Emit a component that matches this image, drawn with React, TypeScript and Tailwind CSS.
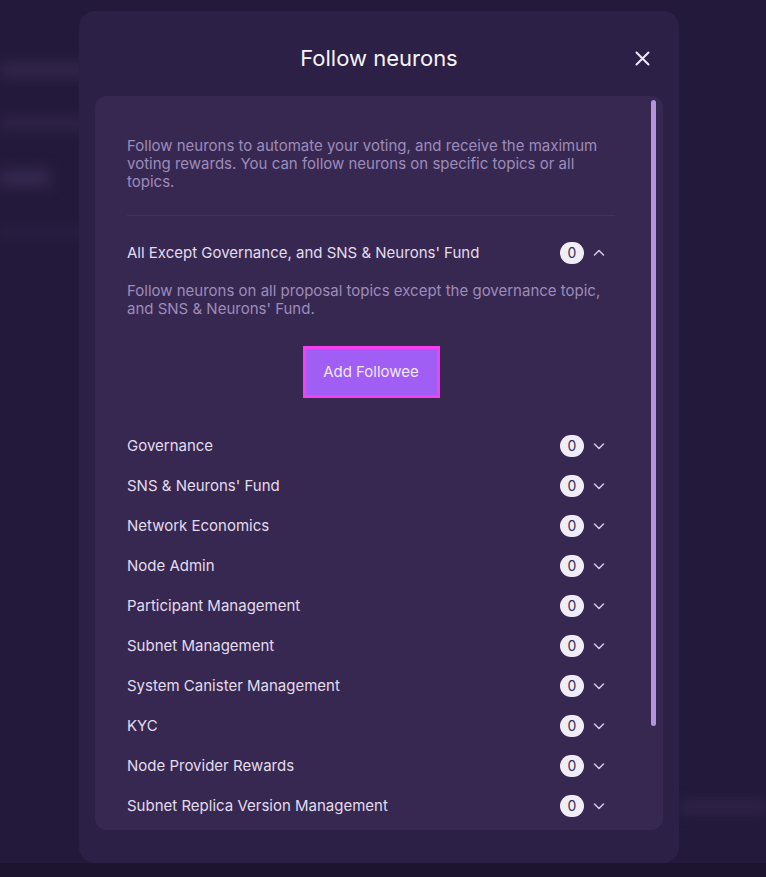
import React from "react";

const topics = [
  "Governance",
  "SNS & Neurons' Fund",
  "Network Economics",
  "Node Admin",
  "Participant Management",
  "Subnet Management",
  "System Canister Management",
  "KYC",
  "Node Provider Rewards",
  "Subnet Replica Version Management",
];

function Chevron({ up }: { up?: boolean }) {
  return (
    <svg width="14" height="14" viewBox="0 0 14 14" fill="none" className="text-[#cfc4e3]">
      <path
        d={up ? "M2.5 9L7 4.5L11.5 9" : "M2.5 5L7 9.5L11.5 5"}
        stroke="currentColor"
        strokeWidth="1.6"
        strokeLinecap="round"
        strokeLinejoin="round"
      />
    </svg>
  );
}

function Badge() {
  return (
    <span className="flex h-[22px] w-[24px] items-center justify-center rounded-full bg-[#f1edf6] text-[14px] leading-none text-[#3b2f55]">
      0
    </span>
  );
}

function TopicRow({ title, open }: { title: string; open?: boolean }) {
  return (
    <div className="flex h-10 items-center justify-between">
      <span className="text-[15px] text-[#e3dcee]">{title}</span>
      <div className="flex items-center gap-[8px]">
        <Badge />
        <Chevron up={open} />
      </div>
    </div>
  );
}

export default function App() {
  return (
    <div
      className="relative h-[877px] w-[766px] overflow-hidden bg-[#231a3b]"
      style={{ fontFamily: "Inter, 'Liberation Sans', sans-serif" }}
    >
      {/* blurred page behind the modal */}
      <div className="flex flex-col gap-[42px] pt-[64px] blur-[7px]">
        <div className="h-[12px] w-[140px] bg-[#362a50]" />
        <div className="h-[10px] w-[150px] bg-[#33274c]" />
        <div className="h-[16px] w-[50px] bg-[#362a50]" />
        <div className="h-[8px] w-[110px] bg-[#2c2145]" />
      </div>
      <div className="absolute bottom-0 left-0 h-[14px] w-full bg-[#1d1530]" />
      <div className="absolute left-[680px] top-[800px] h-[14px] w-[86px] bg-[#2e2347] blur-[6px]" />

      <div className="absolute left-[79px] top-[11px] flex h-[852px] w-[600px] flex-col rounded-[16px] bg-[#2c2046] px-4 pb-[33px]">
        <div className="relative flex h-[85px] items-center justify-center pt-[10px]">
          <h2 className="text-[22px] font-normal text-[#f6f3fa]">Follow neurons</h2>
          <svg
            className="absolute right-[13px] top-[40px]"
            width="15"
            height="15"
            viewBox="0 0 15 15"
            fill="none"
          >
            <path d="M1.5 1.5L13.5 13.5M13.5 1.5L1.5 13.5" stroke="#eeeaf4" strokeWidth="2" strokeLinecap="round" />
          </svg>
        </div>

        <div className="relative flex-1 overflow-hidden rounded-[12px] bg-[#372851]">
          <div className="pl-8 pr-12 pt-[41px]">
            <p className="text-[15px] leading-[18px] text-[#9d8cba]">
              Follow neurons to automate your voting, and receive the maximum voting rewards. You can follow neurons
              on specific topics or all topics.
            </p>
            <div className="mt-[24px] border-t border-[#42335d]" />

            <div className="mt-[17px] pr-[9px]">
              <TopicRow title="All Except Governance, and SNS & Neurons' Fund" open />
            </div>
            <p className="mt-[9px] pr-[9px] text-[15px] leading-[18px] text-[#9d8cba]">
              Follow neurons on all proposal topics except the governance topic, and SNS &amp; Neurons' Fund.
            </p>
            <div className="mt-[28px] flex justify-center">
              <button className="h-[52px] w-[137px] border-[3px] border-[#f63ef2] bg-[#a05ef5] text-[15px] text-[#f0e8fc]">
                Add Followee
              </button>
            </div>

            <div className="mt-[28px] pr-[9px]">
              {topics.map((t) => (
                <TopicRow key={t} title={t} />
              ))}
            </div>
          </div>

          <div className="absolute right-[7px] top-[4px] h-[626px] w-[5px] rounded-full bg-[#b096d9]" />
        </div>
      </div>
    </div>
  );
}
